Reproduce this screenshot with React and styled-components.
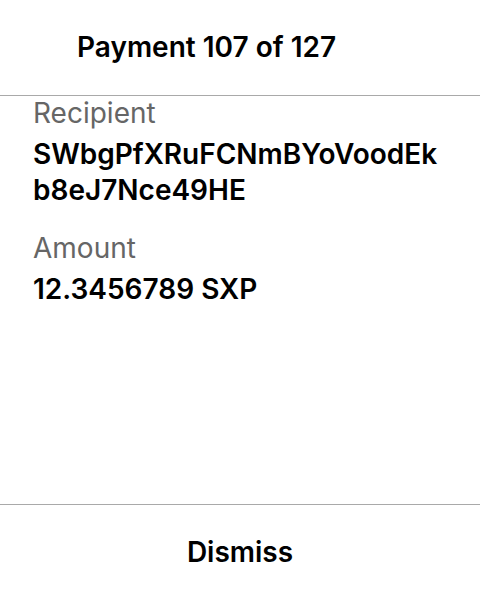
import React from 'react';
import styled, {createGlobalStyle} from 'styled-components';

const GlobalStyle = createGlobalStyle`
    html, body {
        margin: 0;
        padding: 0;
        background: #fff;
    }
    body {
        font-family: Inter, "Noto Sans", sans-serif;
        color: #000;
    }
`;

const Screen = styled.div`
    width: 480px;
    height: 600px;
    display: flex;
    flex-direction: column;
    overflow: hidden;
`;

const Header = styled.div`
    height: 96px;
    box-sizing: border-box;
    padding: 31px 0 0 77px;
    border-bottom: 1px solid #a9a9a9;
`;

const Title = styled.div`
    font-size: 28px;
    font-weight: 600;
    line-height: 32px;
`;

const Body = styled.div`
    flex: 1;
    padding: 0 33px;
`;

const Field = styled.div`
    margin-top: ${props => props.first ? '0' : '23px'};
`;

const Label = styled.div`
    font-size: 28px;
    line-height: 34px;
    color: #666;
`;

const Value = styled.div`
    margin-top: 6px;
    font-size: 28px;
    font-weight: 600;
    line-height: 36px;
    word-break: break-all;
`;

const Footer = styled.div`
    height: 96px;
    box-sizing: border-box;
    padding-bottom: 2px;
    border-top: 1px solid #a9a9a9;
    display: flex;
    align-items: center;
    justify-content: center;
`;

const DismissButton = styled.button`
    border: none;
    background: none;
    font-family: inherit;
    font-size: 28px;
    font-weight: 600;
    color: #000;
    padding: 0;
    cursor: pointer;
`;

const App = () => (
    <Screen>
        <GlobalStyle/>
        <Header>
            <Title>Payment 107 of 127</Title>
        </Header>
        <Body>
            <Field first>
                <Label>Recipient</Label>
                <Value>SWbgPfXRuFCNmBYoVoodEk<br/>b8eJ7Nce49HE</Value>
            </Field>
            <Field>
                <Label>Amount</Label>
                <Value>12.3456789 SXP</Value>
            </Field>
        </Body>
        <Footer>
            <DismissButton>Dismiss</DismissButton>
        </Footer>
    </Screen>
);

export default App;
